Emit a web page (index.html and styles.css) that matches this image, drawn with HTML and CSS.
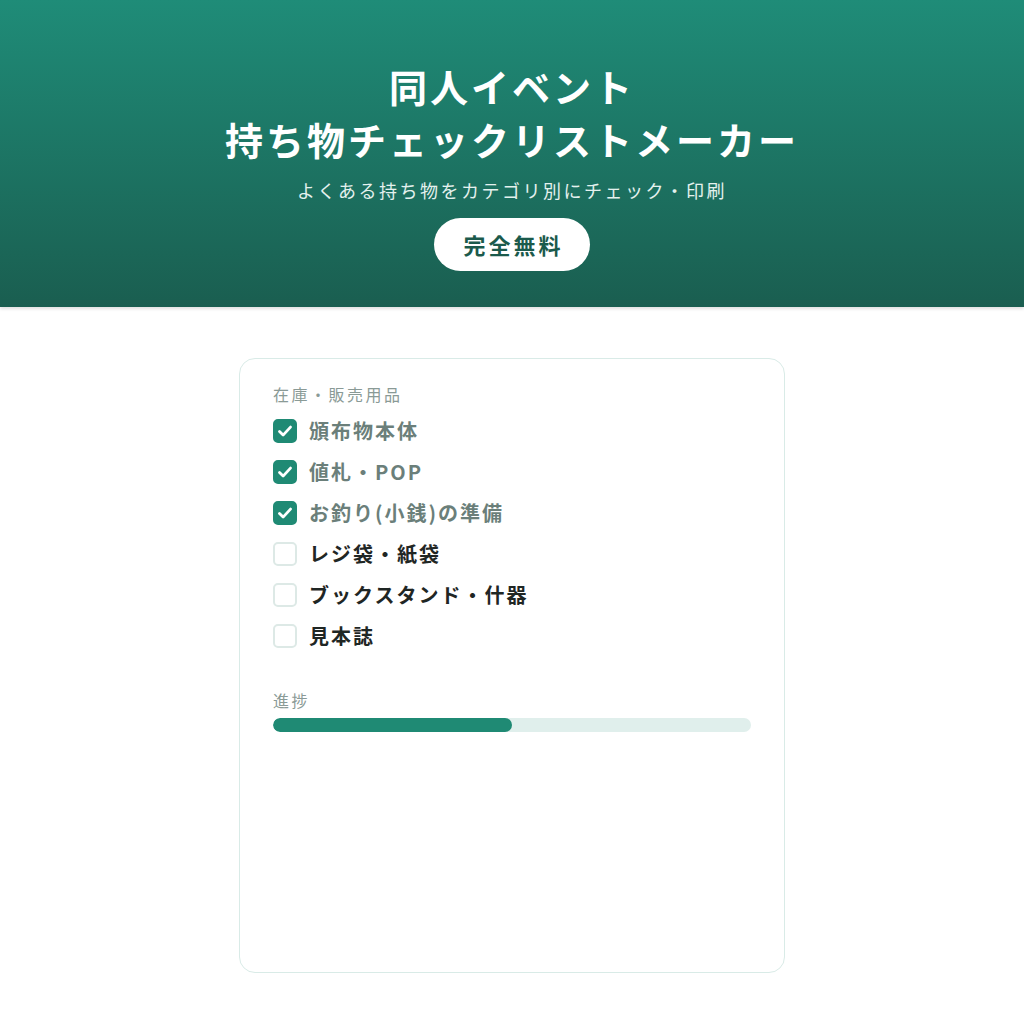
FILE: index.html
```html
<!DOCTYPE html>
<html lang="ja">
<head>
    <meta charset="UTF-8">
    <meta name="viewport" content="width=device-width, initial-scale=1.0">
    <link rel="stylesheet" href="styles.css">
    <title>同人イベント 持ち物チェックリストメーカー</title>
</head>
<body>
    <div class="hero">
        <h1 class="hero-title">同人イベント<br>持ち物チェックリストメーカー</h1>
        <p class="hero-sub">よくある持ち物をカテゴリ別にチェック・印刷</p>
        <div class="hero-badge">完全無料</div>
    </div>

    <div class="main">
        <div class="card">
            <div class="section-label">在庫・販売用品</div>
            <ul class="check-list">
                <li class="check-item done"><span class="box"><svg viewBox="0 0 24 24" width="24" height="24"><path d="M6.5 12.5l3.6 3.6 7.4-8" fill="none" stroke="#fff" stroke-width="2.8" stroke-linecap="round" stroke-linejoin="round"/></svg></span>頒布物本体</li>
                <li class="check-item done"><span class="box"><svg viewBox="0 0 24 24" width="24" height="24"><path d="M6.5 12.5l3.6 3.6 7.4-8" fill="none" stroke="#fff" stroke-width="2.8" stroke-linecap="round" stroke-linejoin="round"/></svg></span>値札・POP</li>
                <li class="check-item done"><span class="box"><svg viewBox="0 0 24 24" width="24" height="24"><path d="M6.5 12.5l3.6 3.6 7.4-8" fill="none" stroke="#fff" stroke-width="2.8" stroke-linecap="round" stroke-linejoin="round"/></svg></span>お釣り(小銭)の準備</li>
                <li class="check-item"><span class="box"></span>レジ袋・紙袋</li>
                <li class="check-item"><span class="box"></span>ブックスタンド・什器</li>
                <li class="check-item"><span class="box"></span>見本誌</li>
            </ul>

            <div class="progress-label">進捗</div>
            <div class="progress">
                <div class="progress-fill" style="width: 50%"></div>
            </div>
        </div>
    </div>
</body>
</html>
```

FILE: styles.css
```css
body {
    margin: 0;
    font-family: "Noto Sans CJK JP", "Noto Sans", sans-serif;
    background-color: #fff;
    color: #1f2a28;
}

.hero {
    background: linear-gradient(to bottom, #1f8c78, #1a5e50);
    color: #fff;
    text-align: center;
    padding: 59px 20px 36px;
    box-shadow: 0 2px 3px rgba(0, 0, 0, 0.12);
}

.hero-title {
    margin: 0;
    font-size: 38px;
    font-weight: 700;
    line-height: 53px;
    letter-spacing: 3px;
}

.hero-sub {
    margin: 12px 0 0;
    font-size: 18px;
    line-height: 27px;
    letter-spacing: 2.5px;
    color: #e4f1ee;
}

.hero-badge {
    display: inline-block;
    margin-top: 14px;
    padding: 10px 26px 10px 29px;
    background-color: #fff;
    color: #1b5a4c;
    border-radius: 27px;
    font-size: 22px;
    font-weight: 700;
    line-height: 33px;
    letter-spacing: 3px;
}

.main {
    padding: 51px 20px 40px;
}

.card {
    max-width: 478px;
    min-height: 567px;
    margin: 0 auto;
    padding: 23px 33px;
    border: 1px solid #d9ebe7;
    border-radius: 16px;
}

.section-label {
    font-size: 16px;
    line-height: 24px;
    letter-spacing: 2.5px;
    color: #8a9a96;
    margin-bottom: 4px;
}

.check-list {
    list-style: none;
    margin: 0;
    padding: 0;
}

.check-item {
    display: flex;
    align-items: center;
    gap: 12px;
    height: 41px;
    font-size: 20px;
    font-weight: 700;
    letter-spacing: 2px;
    color: #1f2624;
}

.check-item.done {
    color: #6b7f7a;
}

.box {
    width: 20px;
    height: 20px;
    border: 2px solid #dde9e6;
    border-radius: 5px;
    display: flex;
    align-items: center;
    justify-content: center;
    flex-shrink: 0;
}

.done .box {
    background-color: #1f8a74;
    border-color: #1f8a74;
}

.done .box svg {
    flex-shrink: 0;
}

.progress-label {
    margin-top: 32px;
    font-size: 16px;
    line-height: 24px;
    letter-spacing: 2.5px;
    color: #8a9a96;
}

.progress {
    margin-top: 6px;
    height: 14px;
    border-radius: 7px;
    background-color: #e0efec;
    overflow: hidden;
}

.progress-fill {
    height: 100%;
    border-radius: 7px;
    background-color: #1f8a74;
}
```
